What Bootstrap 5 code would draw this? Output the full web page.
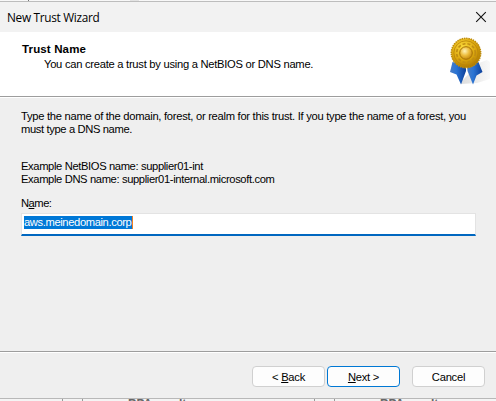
<!DOCTYPE html>
<html lang="en">
<head>
<meta charset="utf-8">
<title>New Trust Wizard</title>
<link href="https://cdn.jsdelivr.net/npm/bootstrap@5.3.0/dist/css/bootstrap.min.css" rel="stylesheet">
<style>
body{width:496px;height:401px;font:11.2px/13px "Liberation Sans",Arial,sans-serif;color:#000;background:#f4f4f4}
.strip-top{height:1px;background:#f8f8f8}
.strip-top i{display:block;width:1px;height:1px;margin-left:28px;background:#777}
.strip-top i+i{width:9px;margin-left:101px;background:#e3e3e3}
.wizard{height:398px;border-top:1px solid #bdbdbd;border-bottom:1px solid #b8b8b8;background:#efefef}
.titlebar{height:30px;background:#f2f2f2;padding:0 9px 1px 7px}
.titlebar h1{font:11.8px/16px "Open Sans","Segoe UI",sans-serif;letter-spacing:-.3px}
.banner{height:65px;border-bottom:1px solid #9d9d9d;padding:10px 5px 0 22px}
.banner h2{font:bold 11.5px/15px "Liberation Sans",Arial,sans-serif;letter-spacing:.14px}
.sub{padding-left:22px;line-height:15px;letter-spacing:-.27px}
.content{height:255px;border-top:1px solid #fff;border-bottom:1px solid #9d9d9d;padding:12px 20px 0 21px}
.l1{letter-spacing:-.28px}.l2{letter-spacing:-.37px}
.examples{margin-top:24px}
.name-label{margin-top:11px;letter-spacing:-.5px}
.field{height:23px;margin-top:3px;background:#fff;border:1px solid #e3e3e3;border-bottom:2px solid #0067c0;padding:2px 0 0 2px}
.sel{width:109px;height:13px;background:#0078d7;color:#fff;border-right:1px solid #f08020;letter-spacing:-.38px}
.actions{height:45px;border-top:1px solid #fff;padding:13px 11px 0 0}
.wbtn{width:73px;height:21px;padding:0;font-size:11.2px;line-height:20px;letter-spacing:-.25px;background:#fdfdfd;border:1px solid #d0d0d0;border-radius:4px;color:#000}
.wbtn.primary{border-color:#0078d4;margin-left:2px}
.wbtn.cancel{margin-left:12px}
u{text-underline-offset:1px}
.strip-bottom{height:2px;position:relative;font:bold 12px/12px "Liberation Sans",sans-serif;color:#666}
.strip-bottom i{position:absolute;top:0;height:2px;width:21px;border:solid #999;border-width:0 1px}
.strip-bottom span{position:absolute;top:-1px;letter-spacing:-.2px}
</style>
</head>
<body class="overflow-hidden">
<div class="strip-top d-flex"><i></i><i></i></div>
<main class="wizard">
<header class="titlebar d-flex justify-content-between align-items-center">
<h1 class="m-0">New Trust Wizard</h1>
<svg width="12" height="12" viewBox="0 0 12 12"><path d="M1.2 1.2l9.6 9.6M10.8 1.2L1.2 10.8" stroke="#111" stroke-width="1.1"/></svg>
</header>
<section class="banner bg-white d-flex justify-content-between">
<div><h2 class="m-0">Trust Name</h2><div class="sub">You can create a trust by using a NetBIOS or DNS name.</div></div>
<svg width="44" height="50" viewBox="0 0 44 50" style="margin-top:-6px">
<defs>
<radialGradient id="gold" cx=".4" cy=".3" r=".75"><stop offset="0" stop-color="#fbd93c"/><stop offset=".55" stop-color="#dca80f"/><stop offset="1" stop-color="#a87400"/></radialGradient>
<radialGradient id="hub" cx=".4" cy=".35" r=".7"><stop offset="0" stop-color="#fff3b8"/><stop offset=".5" stop-color="#edbd3d"/><stop offset="1" stop-color="#c18408"/></radialGradient>
<linearGradient id="blue"><stop offset="0" stop-color="#4a7cc4"/><stop offset=".4" stop-color="#2a74d4"/><stop offset="1" stop-color="#0c3f9a"/></linearGradient>
<linearGradient id="shade"><stop offset="0" stop-color="#bbb"/><stop offset="1" stop-color="#f3f3f3"/></linearGradient>
</defs>
<path d="M14 46L32 27 40 24 43 26V43L30 47 14 48z" fill="url(#shade)" opacity=".5"/>
<path d="M5.500 26L3 36 9.500 38.500 14 48.500 19 35V29z" fill="url(#blue)"/>
<path d="M20 30L20.500 35 26 48.500 29.500 39.500 35.500 36 31 25z" fill="url(#blue)"/>
<circle cx="19" cy="17" r="14.7" fill="url(#gold)" stroke="#bd8c0c" stroke-width="1.5" stroke-dasharray="1.4 .9"/>
<circle cx="19" cy="17" r="12.2" fill="none" stroke="#b98409" stroke-width=".8"/>
<circle cx="19" cy="17" r="9.3" fill="none" stroke="#c08d12" stroke-width="1.6" stroke-dasharray="3 2"/>
<circle cx="19" cy="17" r="6.3" fill="url(#hub)" stroke="#a87306"/>
</svg>
</section>
<section class="content">
<div class="l1 text-nowrap">Type the name of the domain, forest, or realm for this trust. If you type the name of a forest, you</div>
<div class="l2">must type a DNS name.</div>
<div class="examples l2"><div>Example NetBIOS name: supplier01-int</div><div>Example DNS name: supplier01-internal.microsoft.com</div></div>
<div class="name-label">N<u>a</u>me:</div>
<div class="field d-flex"><span class="sel">aws.meinedomain.corp</span></div>
</section>
<footer class="actions d-flex justify-content-end">
<button class="btn wbtn">&lt; <u>B</u>ack</button><button class="btn wbtn primary"><u>N</u>ext &gt;</button><button class="btn wbtn cancel">Cancel</button>
</footer>
</main>
<div class="strip-bottom overflow-hidden"><i style="left:62px"></i><span style="left:128px">BPA results</span><i style="left:314px"></i><span style="left:380px">BPA results</span></div>
<script src="https://cdn.jsdelivr.net/npm/bootstrap@5.3.0/dist/js/bootstrap.bundle.min.js"></script>
</body>
</html>
